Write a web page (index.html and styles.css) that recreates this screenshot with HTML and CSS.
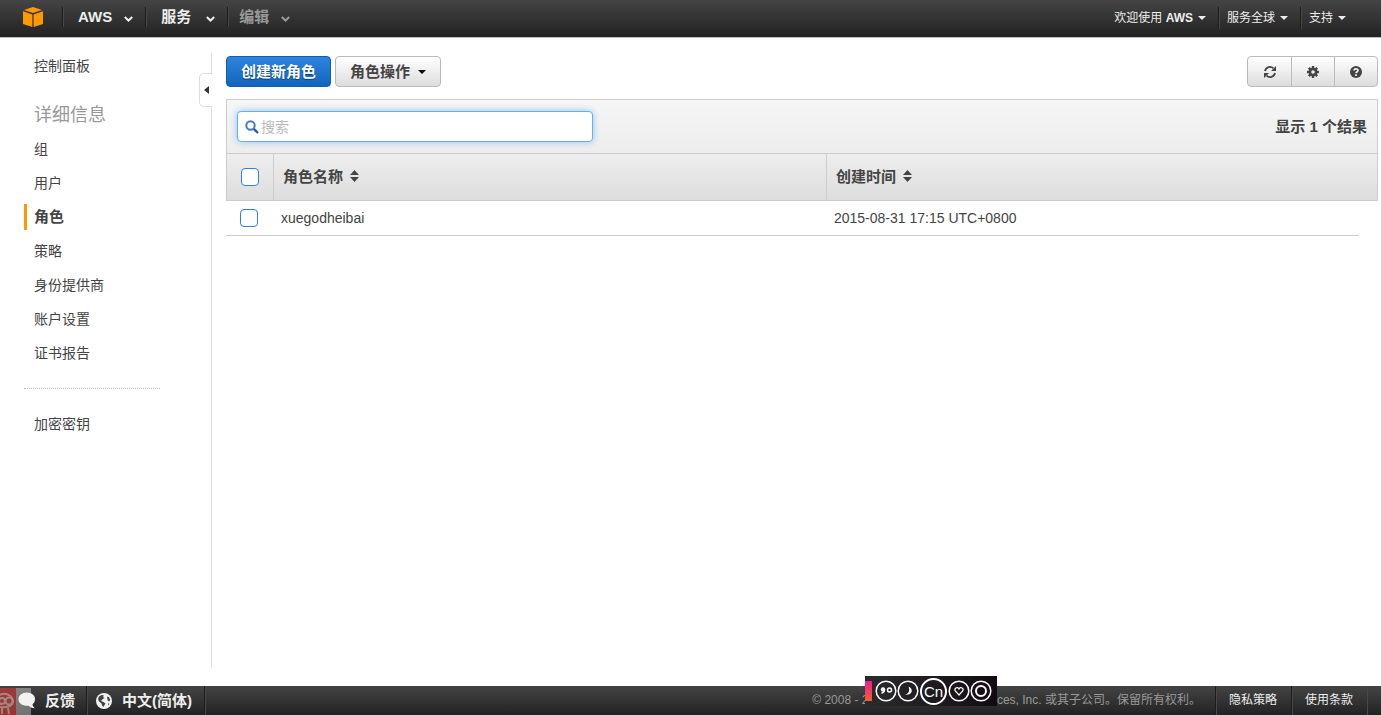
FILE: index.html
```html
<!DOCTYPE html>
<html lang="zh-CN">
<head>
<meta charset="utf-8">
<title>IAM 角色</title>
<link rel="stylesheet" href="styles.css">
</head>
<body>
<header class="topbar">
  <nav class="topbar-left">
    <a class="logo" href="#" aria-label="AWS"><svg width="20" height="20" viewBox="0 0 20 20" fill="#ff9900"><path d="M10 0 19 3 10 6 1 3z"/><path d="M0 4.300 9.400 7.400V20L0 17z"/><path d="M20 4.300 10.600 7.400V20L20 17z"/></svg></a>
    <button class="nav-item" type="button">AWS<svg class="chev" width="9" height="6" viewBox="0 0 9 6"><path d="M0.800 1 4.500 4.500 8.200 1"/></svg></button>
    <button class="nav-item" type="button">服务<svg class="chev" width="9" height="6" viewBox="0 0 9 6"><path d="M0.800 1 4.500 4.500 8.200 1"/></svg></button>
    <button class="nav-item dim" type="button">编辑<svg class="chev" width="9" height="6" viewBox="0 0 9 6"><path d="M0.800 1 4.500 4.500 8.200 1"/></svg></button>
  </nav>
  <nav class="topbar-right">
    <button class="small-item" type="button"><span>欢迎使用 <b>AWS</b></span><i class="caret"></i></button>
    <button class="small-item" type="button">服务全球<i class="caret"></i></button>
    <button class="small-item" type="button">支持<i class="caret"></i></button>
  </nav>
</header>

<div class="body">
  <aside class="sidebar">
    <nav class="side-nav">
      <a class="side-link" href="#">控制面板</a>
      <h2 class="side-title">详细信息</h2>
      <a class="side-link" href="#">组</a>
      <a class="side-link" href="#">用户</a>
      <a class="side-link active" href="#">角色</a>
      <a class="side-link" href="#">策略</a>
      <a class="side-link" href="#">身份提供商</a>
      <a class="side-link" href="#">账户设置</a>
      <a class="side-link" href="#">证书报告</a>
      <hr class="side-rule">
      <a class="side-link" href="#">加密密钥</a>
    </nav>
    <button class="collapse" type="button" aria-label="折叠"><svg width="5" height="8" viewBox="0 0 5 8"><path d="M5 0V8L0 4z" fill="#333"/></svg></button>
  </aside>

  <main class="main">
    <div class="toolbar">
      <button class="btn primary" type="button">创建新角色</button>
      <button class="btn" type="button">角色操作<i class="caret"></i></button>
      <div class="icon-group">
        <button class="icon-btn" type="button" aria-label="刷新"><svg width="12" height="12" viewBox="0 0 12 12"><path d="M1 5A5 5 0 0 1 9.400 2.400M11 7A5 5 0 0 1 2.600 9.600" fill="none" stroke="#444" stroke-width="1.800"/><path d="M12 0V5H7zM0 12V7H5z" fill="#444"/></svg></button>
        <button class="icon-btn" type="button" aria-label="设置"><svg width="12" height="12" viewBox="0 0 12 12"><g stroke="#444" stroke-width="2.400"><path d="M6 0V12M0 6H12M1.800 1.800 10.200 10.200M10.200 1.800 1.800 10.200"/></g><circle cx="6" cy="6" r="4.300" fill="#444"/><circle cx="6" cy="6" r="1.800" fill="#eee"/></svg></button>
        <button class="icon-btn" type="button" aria-label="帮助"><svg width="12" height="12" viewBox="0 0 12 12"><circle cx="6" cy="6" r="6" fill="#444"/><path d="M4 4.600C4 2.200 8 2.300 8 4.500 8 5.900 6 5.700 6 7.300" fill="none" stroke="#eee" stroke-width="1.700"/><path d="M5.100 8.200H6.900V9.900H5.100z" fill="#eee"/></svg></button>
      </div>
    </div>

    <div class="filter">
      <label class="search">
        <svg width="14" height="14" viewBox="0 0 14 14" fill="none"><circle cx="5.500" cy="5.500" r="4.200" stroke="#3b7fc9" stroke-width="2"/><path d="M8.800 8.800 13 13" stroke="#34589c" stroke-width="2.400"/></svg>
        <input class="search-input" type="text" placeholder="搜索" aria-label="搜索">
      </label>
      <span class="count">显示 1 个结果</span>
    </div>

    <table class="grid">
      <colgroup><col class="c-check"><col class="c-name"><col><col class="c-gutter"></colgroup>
      <thead>
        <tr>
          <th><input class="check" type="checkbox" aria-label="全选"></th>
          <th>角色名称<svg class="sort" width="9" height="12" viewBox="0 0 9 12"><path d="M0 5 4.500 0 9 5zM0 7H9L4.500 12z"/></svg></th>
          <th colspan="2">创建时间<svg class="sort" width="9" height="12" viewBox="0 0 9 12"><path d="M0 5 4.500 0 9 5zM0 7H9L4.500 12z"/></svg></th>
        </tr>
      </thead>
      <tbody>
        <tr>
          <td><input class="check" type="checkbox" aria-label="xuegodheibai"></td>
          <td>xuegodheibai</td>
          <td>2015-08-31 17:15 UTC+0800</td>
          <td class="gutter"></td>
        </tr>
      </tbody>
    </table>
  </main>
</div>

<footer class="footer">
  <button class="foot-item feedback" type="button"><svg width="18" height="17" viewBox="0 0 18 17"><path d="M9 0.500C13.900 0.500 17 3.500 17 7 17 9.500 16 11.200 14.500 12.300 14.700 14 15.500 15 16.800 16.200 14 16.200 12 15 10.800 13.700 5 14.300 0.500 11.500 0.500 7.200 0.500 3.500 4 0.500 9 0.500z" fill="#f2f2f2"/></svg>反馈</button>
  <button class="foot-item" type="button"><svg width="16" height="16" viewBox="0 0 16 16"><circle cx="8" cy="8" r="8" fill="#f2f2f2"/><path d="M3 3.500 5.500 2 8 2.500 7 4 8.500 5 6.500 6.200 5 8 7.500 9 9.500 10.500 8.500 12 7.500 14 6 12.500 5.500 10.500 3 8.500 2 6z" fill="#444"/><path d="M11 3.500 13 4.200 14.300 7 13 8.500 11.500 7zM12 10.500 13.500 10.500 12 12.500z" fill="#444"/></svg>中文(简体)</button>
  <span class="foot-space"></span>
  <span class="copyright">© 2008 - 2015, Amazon Web Services, Inc. 或其子公司。保留所有权利。</span>
  <a class="foot-link" href="#">隐私策略</a>
  <a class="foot-link last" href="#">使用条款</a>
</footer>

<svg class="corner" width="31" height="27" viewBox="0 0 31 27"><path d="M0 0H16V27H0z" fill="#b33a35"/><path d="M16 0H31V27H16z" fill="#ccc" opacity=".6"/><g fill="none" stroke="#c79a95" stroke-width="2"><circle cx="2" cy="13" r="3"/><circle cx="9" cy="13" r="3.500"/><path d="M0 7C5 4 12 7 13 13 13 18 7 20 0 19M2 20V26M8 20 9 26"/></g></svg>

<div class="ime">
  <span class="ime-bar"></span>
  <svg width="22" height="22" viewBox="0 0 22 22"><circle cx="11" cy="11" r="9.800"/><circle cx="14.500" cy="10" r="2"/><circle class="solid" cx="8" cy="9.500" r="2.200"/><path d="M9.500 9.500C9.500 11.500 8.500 12.700 6.500 13.300"/></svg>
  <svg width="22" height="22" viewBox="0 0 22 22"><circle cx="11" cy="11" r="9.800"/><path class="solid" d="M11.500 6.500C17 9 15.500 15.500 8 14.800 12 13.500 13 10.500 11.500 6.500z"/></svg>
  <span class="cn">Cn</span>
  <svg width="22" height="22" viewBox="0 0 22 22"><circle cx="11" cy="11" r="9.800"/><path d="M11 15 7.300 11C5.800 8.500 9.300 6 11 9 12.700 6 16.200 8.500 14.700 11z" stroke-width="1.200"/></svg>
  <svg width="22" height="22" viewBox="0 0 22 22"><circle cx="11" cy="11" r="9.800"/><circle cx="11" cy="11" r="5" stroke-width="2"/></svg>
</div>
</body>
</html>
```
FILE: styles.css
```css
* { box-sizing: border-box; }
body {
  margin: 0;
  min-height: 100vh;
  display: flex;
  flex-direction: column;
  position: relative;
  background: #fff;
  color: #444;
  font: 14px/20px "Liberation Sans", "Noto Sans CJK SC", sans-serif;
}
button { font: inherit; color: inherit; border: 0; background: none; padding: 0; margin: 0; cursor: pointer; }
a { color: inherit; text-decoration: none; }
svg { flex: none; }
.caret { border: 4px solid transparent; border-top-color: currentColor; border-bottom: 0; }

.topbar {
  height: 38px;
  display: flex;
  justify-content: space-between;
  align-items: flex-start;
  background: linear-gradient(#444, #222);
  border-bottom: 1px solid #bbb;
  color: #eee;
  text-shadow: 0 1px 0 #000;
}
.topbar-left, .topbar-right { display: flex; padding-top: 7px; }
.logo { width: 62px; height: 20px; padding-left: 23px; }
.nav-item {
  display: flex;
  align-items: center;
  justify-content: space-between;
  gap: 12px;
  min-width: 82px;
  height: 20px;
  padding: 0 12px 0 15px;
  border-left: 1px solid #1c1c1c;
  box-shadow: inset 1px 0 #484848;
  font-size: 15px;
  font-weight: bold;
}
.chev { fill: none; stroke: currentColor; stroke-width: 2; margin-top: 3px; }
.dim { min-width: 0; color: #999; padding-left: 11px; }
.topbar-right { padding-right: 26px; }
.small-item {
  display: flex;
  align-items: center;
  gap: 5px;
  height: 22px;
  padding: 0 12px 0 8px;
  font-size: 12px;
}
.small-item + .small-item { border-left: 1px solid #1c1c1c; box-shadow: inset 1px 0 #484848; }
.small-item:last-child { padding-right: 9px; }

.body { flex: 1; display: flex; }
.sidebar { width: 212px; flex: none; margin: 15px 0 18px; border-right: 1px solid #ddd; position: relative; }
.side-nav { display: flex; flex-direction: column; width: 160px; padding-left: 24px; }
.side-link { height: 26px; line-height: 26px; margin-bottom: 8px; padding-left: 10px; white-space: nowrap; }
.side-title { margin: 15px 0 8px; padding-left: 10px; font-size: 18px; line-height: 26px; font-weight: normal; color: #999; }
.active { border-left: 3px solid #f90; padding-left: 7px; font-size: 15px; font-weight: bold; }
.side-rule { width: 100%; margin: 14px 0 22px; border: 0; border-top: 1px dotted #bbb; }
.collapse {
  position: absolute;
  top: 20px;
  right: -1px;
  width: 13px;
  height: 34px;
  display: flex;
  align-items: center;
  justify-content: center;
  background: #fff;
  border: 1px solid #ddd;
  border-right: 0;
  border-radius: 5px 0 0 5px;
}

.main { flex: 1; min-width: 0; padding: 18px 3px 0 14px; }
.toolbar { display: flex; gap: 4px; margin-bottom: 12px; }
.btn {
  display: flex;
  align-items: center;
  gap: 8px;
  height: 31px;
  padding: 0 14px;
  border: 1px solid #bbb;
  border-radius: 4px;
  background: linear-gradient(#fff, #ddd);
  font-size: 15px;
  font-weight: bold;
}
.btn .caret { color: #000; }
.primary { background: linear-gradient(#2e83df, #1166bb); border-color: #0f5fae; color: #fff; text-shadow: 0 1px 1px #0a3a70; }
.icon-group { display: flex; margin-left: auto; border: 1px solid #bbb; border-radius: 4px; background: linear-gradient(#fff, #ddd); }
.icon-btn { width: 43px; height: 29px; display: flex; align-items: center; justify-content: center; }
.icon-btn + .icon-btn { border-left: 1px solid #bbb; }

.filter {
  display: flex;
  align-items: center;
  justify-content: space-between;
  height: 54px;
  padding: 0 10px;
  border: 1px solid #ccc;
  border-bottom: 0;
  background: linear-gradient(#f6f6f6, #ededed);
}
.search {
  display: flex;
  align-items: center;
  gap: 2px;
  width: 356px;
  height: 31px;
  padding: 0 7px;
  border: 1px solid #66afe9;
  border-radius: 4px;
  background: #fff;
  box-shadow: 0 0 7px #8fc4f0;
}
.search-input { flex: 1; min-width: 0; border: 0; outline: 0; padding: 0; background: none; font: inherit; color: #444; }
.search-input::placeholder { color: #bbb; }
.count { font-size: 15px; font-weight: bold; }

.grid { width: 100%; table-layout: fixed; border-collapse: separate; border-spacing: 0; }
.c-check { width: 48px; }
.c-name { width: 48%; }
.c-gutter { width: 19px; }
.grid th {
  height: 48px;
  padding: 0 9px;
  text-align: left;
  font-size: 15px;
  border: 1px solid #ccc;
  border-left: 0;
  background: linear-gradient(#eee, #ddd);
}
.grid th:first-child { border-left: 1px solid #ccc; padding-left: 14px; }
.grid td { height: 35px; padding: 0 7px; border-bottom: 1px solid #ccc; }
.grid td:first-child { padding-left: 14px; }
.grid td.gutter { border: 0; }
.sort { fill: #444; margin-left: 7px; }
.check {
  appearance: none;
  display: block;
  width: 18px;
  height: 18px;
  margin: 0;
  border: 1px solid #2e83df;
  border-radius: 4px;
  background: #fff;
}

.footer {
  height: 29px;
  display: flex;
  background: linear-gradient(#444, #222);
  color: #eee;
  font-size: 12px;
  line-height: 29px;
  white-space: nowrap;
}
.foot-item {
  display: flex;
  align-items: center;
  gap: 10px;
  padding: 0 12px 0 9px;
  border-right: 1px solid #1c1c1c;
  box-shadow: 1px 0 #484848;
  font-size: 15px;
  font-weight: bold;
}
.feedback { gap: 9px; padding: 0 11px 0 18px; }
.foot-space { flex: 1; }
.copyright { color: #999; margin-right: 14px; }
.foot-link { padding: 0 14px 0 13px; border-left: 1px solid #1c1c1c; box-shadow: inset 1px 0 #484848; }
.last { border-right: 1px solid #484848; margin-right: 13px; }

.corner { position: absolute; left: 0; bottom: 0; opacity: .8; }
.feedback svg { position: relative; z-index: 1; }
.ime {
  position: absolute;
  right: 384px;
  bottom: 9px;
  width: 132px;
  height: 30px;
  display: flex;
  align-items: center;
  background: linear-gradient(90deg, #2b2b2d, #120c12);
}
.ime svg { fill: none; stroke: #fff; stroke-width: 1.5; }
.ime svg .solid { fill: #fff; stroke: none; }
.ime-bar { width: 7px; height: 20px; margin-right: 3px; background: linear-gradient(#f01a9c, #f0602a); }
.cn {
  width: 27px;
  height: 27px;
  margin: 0 1px;
  border: 2px solid #fff;
  border-radius: 50%;
  color: #fff;
  font-size: 15px;
  line-height: 23px;
  text-align: center;
}
```
